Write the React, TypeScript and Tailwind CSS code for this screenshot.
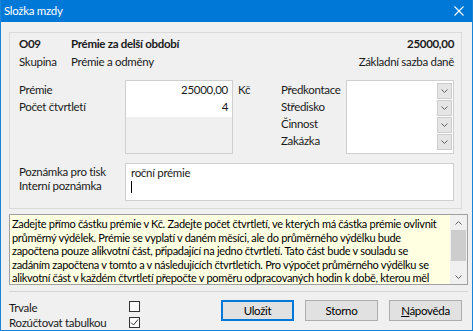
import React from "react";

const font = { fontFamily: 'Lato, "Noto Sans", sans-serif' };

const helpLines = [
  "Zadejte přímo částku prémie v Kč. Zadejte počet čtvrtletí, ve kterých má částka prémie ovlivnit",
  "průměrný výdělek. Prémie se vyplatí v daném měsíci, ale do průměrného výdělku bude",
  "započtena pouze alikvotní část, připadající na jedno čtvrtletí. Tato část bude v souladu se",
  "zadáním započtena v tomto a v následujících čtvrtletích. Pro výpočet průměrného výdělku se",
  "alikvotní část v každém čtvrtletí přepočte v poměru odpracovaných hodin k době, kterou měl",
];

const Chevron = ({ up = false }: { up?: boolean }) => (
  <svg width="7" height="4" viewBox="0 0 7 4" className={up ? "rotate-180" : ""}>
    <path d="M0.5 0.5 L3.5 3.5 L6.5 0.5" fill="none" stroke="#606060" strokeWidth="1" />
  </svg>
);

const ComboButton = () => (
  <div className="w-[15px] h-[16px] bg-[#e5e5e5] border border-[#cccccc] flex items-center justify-center">
    <Chevron />
  </div>
);

const Button = ({ children, primary = false }: { children: React.ReactNode; primary?: boolean }) => (
  <button
    className={`w-[73px] h-[21px] bg-[#e1e1e1] text-[11.5px] text-[#000] flex items-center justify-center ${
      primary ? "border-2 border-[#0078d7]" : "border border-[#adadad]"
    }`}
  >
    {children}
  </button>
);

const Checkbox = ({ checked = false }: { checked?: boolean }) => (
  <div className="w-[11px] h-[11px] border border-[#333333] bg-white flex items-center justify-center">
    {checked && (
      <svg width="9" height="9" viewBox="0 0 9 9">
        <path d="M1 4.5 L3.5 7 L8 1.5" fill="none" stroke="#333333" strokeWidth="1" />
      </svg>
    )}
  </div>
);

export default function App() {
  return (
    <div
      style={font}
      className="w-[473px] h-[331px] bg-[#f0f0f0] border-x border-b border-[#1883d7] flex flex-col text-[11.5px] tracking-[-0.3px] text-[#1a1a1a] overflow-hidden"
    >
      {/* title bar */}
      <div className="h-[22px] bg-[#0078d7] text-white flex items-center justify-between pl-[4px] pr-[9px] -mx-px">
        <span className="text-[11.5px]">Složka mzdy</span>
        <svg width="10" height="10" viewBox="0 0 10 10">
          <path d="M0.5 0.5 L9.5 9.5 M9.5 0.5 L0.5 9.5" stroke="white" strokeWidth="1.1" />
        </svg>
      </div>

      <div className="flex flex-col pl-[8px] pr-[4px]">
        {/* main panel */}
        <div className="mt-[10px] mr-[6px] border border-[#dadada] pl-[9px] pr-[7px] pt-[2px] pb-[7px] flex flex-col">
          <div className="flex items-center h-[18px]">
            <span className="w-[52px] font-bold">O09</span>
            <span className="font-bold flex-1">Prémie za delší období</span>
            <span className="font-bold">25000,00</span>
          </div>
          <div className="flex items-center h-[18px]">
            <span className="w-[52px]">Skupina</span>
            <span className="flex-1">Prémie a odměny</span>
            <span>Základní sazba daně</span>
          </div>

          <div className="flex mt-[9px]">
            <div className="w-[106px] pt-px">
              <div className="h-[17px] flex items-center">Prémie</div>
              <div className="h-[17px] flex items-center">Počet čtvrtletí</div>
            </div>
            <div className="w-[108px] h-[74px] border border-[#cfcfcf] flex flex-col">
              <div className="bg-white h-[36px] pr-[4px]">
                <div className="h-[17px] flex items-center justify-end">25000,00</div>
                <div className="h-[17px] flex items-center justify-end">4</div>
              </div>
            </div>
            <div className="w-[48px] pl-[5px] pt-px">
              <div className="h-[17px] flex items-center">Kč</div>
            </div>
            <div className="w-[65px] pt-px">
              <div className="h-[17px] flex items-center">Předkontace</div>
              <div className="h-[17px] flex items-center">Středisko</div>
              <div className="h-[17px] flex items-center">Činnost</div>
              <div className="h-[17px] flex items-center">Zakázka</div>
            </div>
            <div className="flex-1 h-[74px] border border-[#cfcfcf] bg-white flex flex-col items-end pt-[2px] pr-px gap-px">
              <ComboButton />
              <ComboButton />
              <ComboButton />
              <ComboButton />
            </div>
          </div>

          <div className="flex mt-[9px]">
            <div className="w-[106px] pt-[2px]">
              <div className="h-[14px] flex items-center">Poznámka pro tisk</div>
              <div className="h-[14px] flex items-center">Interní poznámka</div>
            </div>
            <div className="flex-1 h-[38px] border border-[#cfcfcf] bg-white pl-[5px] pt-[2px]">
              <div className="h-[14px] flex items-center">roční prémie</div>
              <div className="h-[14px] flex items-center">
                <span className="w-px h-[12px] bg-black" />
              </div>
            </div>
          </div>
        </div>

        {/* help text */}
        <div className="mt-[5px] h-[71px] border border-[#a0a0a0] bg-[#ffffe1] flex">
          <div className="flex-1 pl-[2px] pt-[2px] overflow-hidden text-[11px] leading-[13.5px] text-[#000]">
            {helpLines.map((l) => (
              <div key={l} className="whitespace-nowrap">
                {l}
              </div>
            ))}
          </div>
          <div className="w-[17px] bg-[#f0f0f0] flex flex-col items-center">
            <div className="h-[15px] flex items-center justify-center">
              <Chevron up />
            </div>
            <div className="w-[15px] h-[31px] bg-[#cdcdcd]" />
            <div className="flex-1" />
            <div className="h-[15px] flex items-center justify-center">
              <Chevron />
            </div>
          </div>
        </div>

        <div className="mt-[6px] h-px bg-[#d5d5d5]" />

        {/* bottom */}
        <div className="flex items-start mt-[8px]">
          <div className="w-[120px]">
            <div className="h-[15px] flex items-center">Trvale</div>
            <div className="h-[15px] flex items-center">Rozúčtovat tabulkou</div>
          </div>
          <div className="flex flex-col gap-[5px] pt-[1px]">
            <Checkbox />
            <Checkbox checked />
          </div>
          <div className="flex-1 flex justify-end gap-[11px] pr-[6px]">
            <Button primary>Uložit</Button>
            <Button>Storno</Button>
            <Button>
              <span>
                <span className="underline">N</span>ápověda
              </span>
            </Button>
          </div>
        </div>
      </div>
    </div>
  );
}
